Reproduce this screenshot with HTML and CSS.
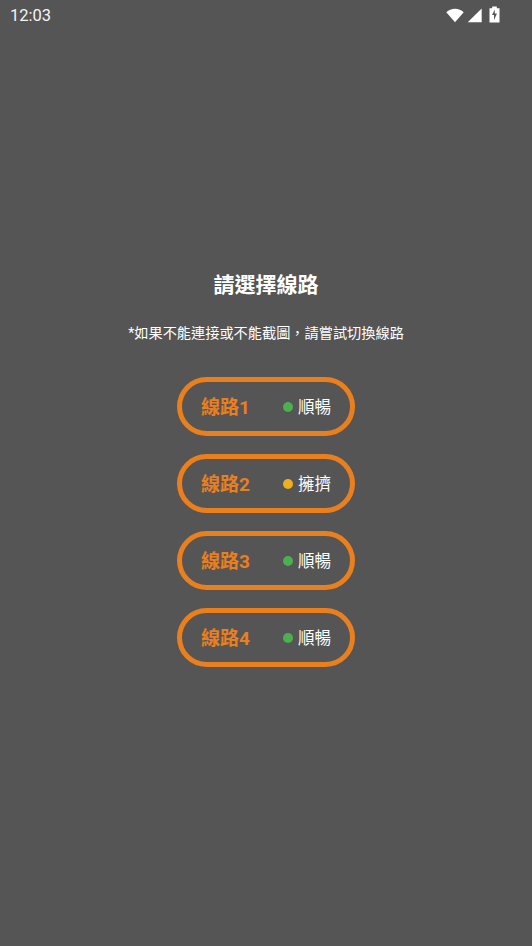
FILE: index.html
```html
<!DOCTYPE html>
<html lang="zh-Hant">
<head>
<meta charset="utf-8">
<title>請選擇線路</title>
<link rel="stylesheet" href="styles.css">
</head>
<body>
<header class="status">
  <span class="time">12:03</span>
  <span class="icons">
    <svg width="18" height="15" viewBox="0 0 18 15"><path d="M0.300 4.300C2.600 1.900 5.700 0.700 9 0.700s6.400 1.200 8.700 3.600L9 14.300z" fill="#fff"/></svg>
    <svg width="15" height="15" viewBox="0 0 15 15" class="signal"><path d="M14.700 0.500V14.300H0.700z" fill="#fff"/></svg>
    <svg width="11" height="17" viewBox="0 0 11 17" class="battery"><path d="M3.200 0.500h4.600v1.700h2.700v14.300H0.500V2.200h2.700z" fill="#fff"/><path d="M5.800 3.500L3 9h2v5l3-6.500H5.800z" fill="#555"/></svg>
  </span>
</header>
<main class="main">
  <h1 class="title">請選擇線路</h1>
  <p class="hint">*如果不能連接或不能截圖，請嘗試切換線路</p>
  <ul class="lines">
    <li class="line"><span class="name">線路1</span><span class="state"><i class="dot good"></i><span class="label">順暢</span></span></li>
    <li class="line"><span class="name">線路2</span><span class="state"><i class="dot busy"></i><span class="label">擁擠</span></span></li>
    <li class="line"><span class="name">線路3</span><span class="state"><i class="dot good"></i><span class="label">順暢</span></span></li>
    <li class="line"><span class="name">線路4</span><span class="state"><i class="dot good"></i><span class="label">順暢</span></span></li>
  </ul>
</main>
</body>
</html>
```
FILE: styles.css
```css
* { box-sizing: border-box; }
html, body { margin: 0; height: 100%; }
body {
  background: #555555;
  color: #fff;
  font-family: Roboto, "Noto Sans CJK SC", sans-serif;
  overflow: hidden;
}
.status {
  height: 30px;
  display: flex;
  align-items: center;
  justify-content: space-between;
  padding: 0 32px 0 10px;
}
.time { font-size: 16.500px; color: #f4f4f4; }
.icons { display: flex; align-items: center; gap: 2px; }
.signal { margin-left: 1px; }
.battery { margin-left: 5px; margin-top: -1px; }
.main {
  display: flex;
  flex-direction: column;
  align-items: center;
  padding-top: 240px;
}
.title {
  margin: 0;
  font-size: 21px;
  line-height: 30px;
  font-weight: 700;
}
.hint {
  margin: 23px 0 0;
  font-size: 14.200px;
  line-height: 20px;
}
.lines {
  list-style: none;
  margin: 34px 0 0;
  padding: 0;
  display: flex;
  flex-direction: column;
  gap: 18px;
}
.line {
  width: 178px;
  height: 59px;
  border: 5px solid #ea7f1e;
  border-radius: 30px;
  display: flex;
  align-items: center;
  justify-content: space-between;
  padding: 0 19px 0 19px;
}
.name {
  color: #ea7f1e;
  font-size: 19px;
  font-weight: 700;
  padding-bottom: 2px;
}
.state {
  display: flex;
  align-items: center;
  font-size: 16.500px;
}
.label { padding-bottom: 2px; }
.dot {
  width: 10px;
  height: 10px;
  border-radius: 50%;
  margin-right: 5px;
}
.good { background: #4caf50; }
.busy { background: #eab01e; }
```
